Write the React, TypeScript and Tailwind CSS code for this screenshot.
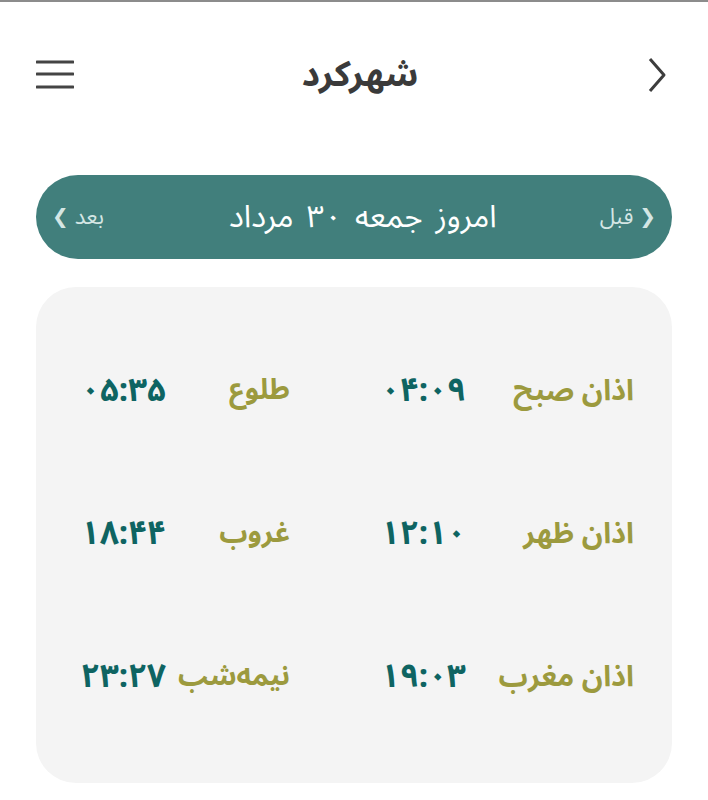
const rows = [
  { a: "اذان صبح", at: "۰۴:۰۹", b: "طلوع", bt: "۰۵:۳۵" },
  { a: "اذان ظهر", at: "۱۲:۱۰", b: "غروب", bt: "۱۸:۴۴" },
  { a: "اذان مغرب", at: "۱۹:۰۳", b: "نیمه‌شب", bt: "۲۳:۲۷" },
];

export default function App() {
  return (
    <div
      dir="rtl"
      className="w-[708px] h-[800px] bg-white border-t-2 border-[#8c8c8c] overflow-hidden"
      style={{ fontFamily: '"Noto Sans Arabic", "Vazirmatn", "DejaVu Sans", sans-serif' }}
    >
      {/* Header */}
      <div className="flex items-center justify-between h-[146px] pr-[40px] pl-[36px]">
        <svg width="22" height="36" viewBox="0 0 22 36" className="text-[#3d3d3d]">
          <path d="M4 2 L18 18 L4 34" fill="none" stroke="currentColor" strokeWidth="3" strokeLinejoin="round" />
        </svg>
        <h1 className="text-[35px] font-bold text-[#3a3a3a] leading-none">شهرکرد</h1>
        <svg width="38" height="30" viewBox="0 0 38 30" className="text-[#444]">
          <line x1="1" y1="2" x2="37" y2="2" stroke="currentColor" strokeWidth="3" strokeLinecap="round" />
          <line x1="1" y1="14" x2="37" y2="14" stroke="currentColor" strokeWidth="3" strokeLinecap="round" />
          <line x1="1" y1="27" x2="37" y2="27" stroke="currentColor" strokeWidth="3" strokeLinecap="round" />
        </svg>
      </div>

      {/* Date pill */}
      <div className="mx-[36px] mt-[27px] h-[84px] rounded-full bg-[#417f7c] flex items-center justify-between px-[16px]">
        <div className="flex items-center gap-[6px] text-[#d4e6e4] text-[22px]">
          <span className="text-[20px] font-bold">❮</span>
          <span>قبل</span>
        </div>
        <div className="text-white text-[31px] flex gap-[13px] -mr-[22px]">
          <span>امروز</span>
          <span>جمعه</span>
          <span>۳۰</span>
          <span>مرداد</span>
        </div>
        <div className="flex items-center gap-[6px] text-[#d4e6e4] text-[22px]">
          <span>بعد</span>
          <span className="text-[20px] font-bold">❯</span>
        </div>
      </div>

      {/* Times card */}
      <div className="mx-[36px] mt-[28px] bg-[#f4f4f4] rounded-[40px] pt-8 pb-[35px] pr-[38px]">
        {rows.map((r) => (
          <div key={r.a} className="grid grid-cols-[168px_176px_124px_1fr] items-center h-[143px]">
            <span className="text-[29px] font-bold text-[#9c9a3e]">{r.a}</span>
            <span className="text-[33px] font-bold text-[#0e6462]">{r.at}</span>
            <span className="text-[28px] font-bold text-[#9c9a3e]">{r.b}</span>
            <span className="text-[33px] font-bold text-[#0e6462]">{r.bt}</span>
          </div>
        ))}
      </div>
    </div>
  );
}
